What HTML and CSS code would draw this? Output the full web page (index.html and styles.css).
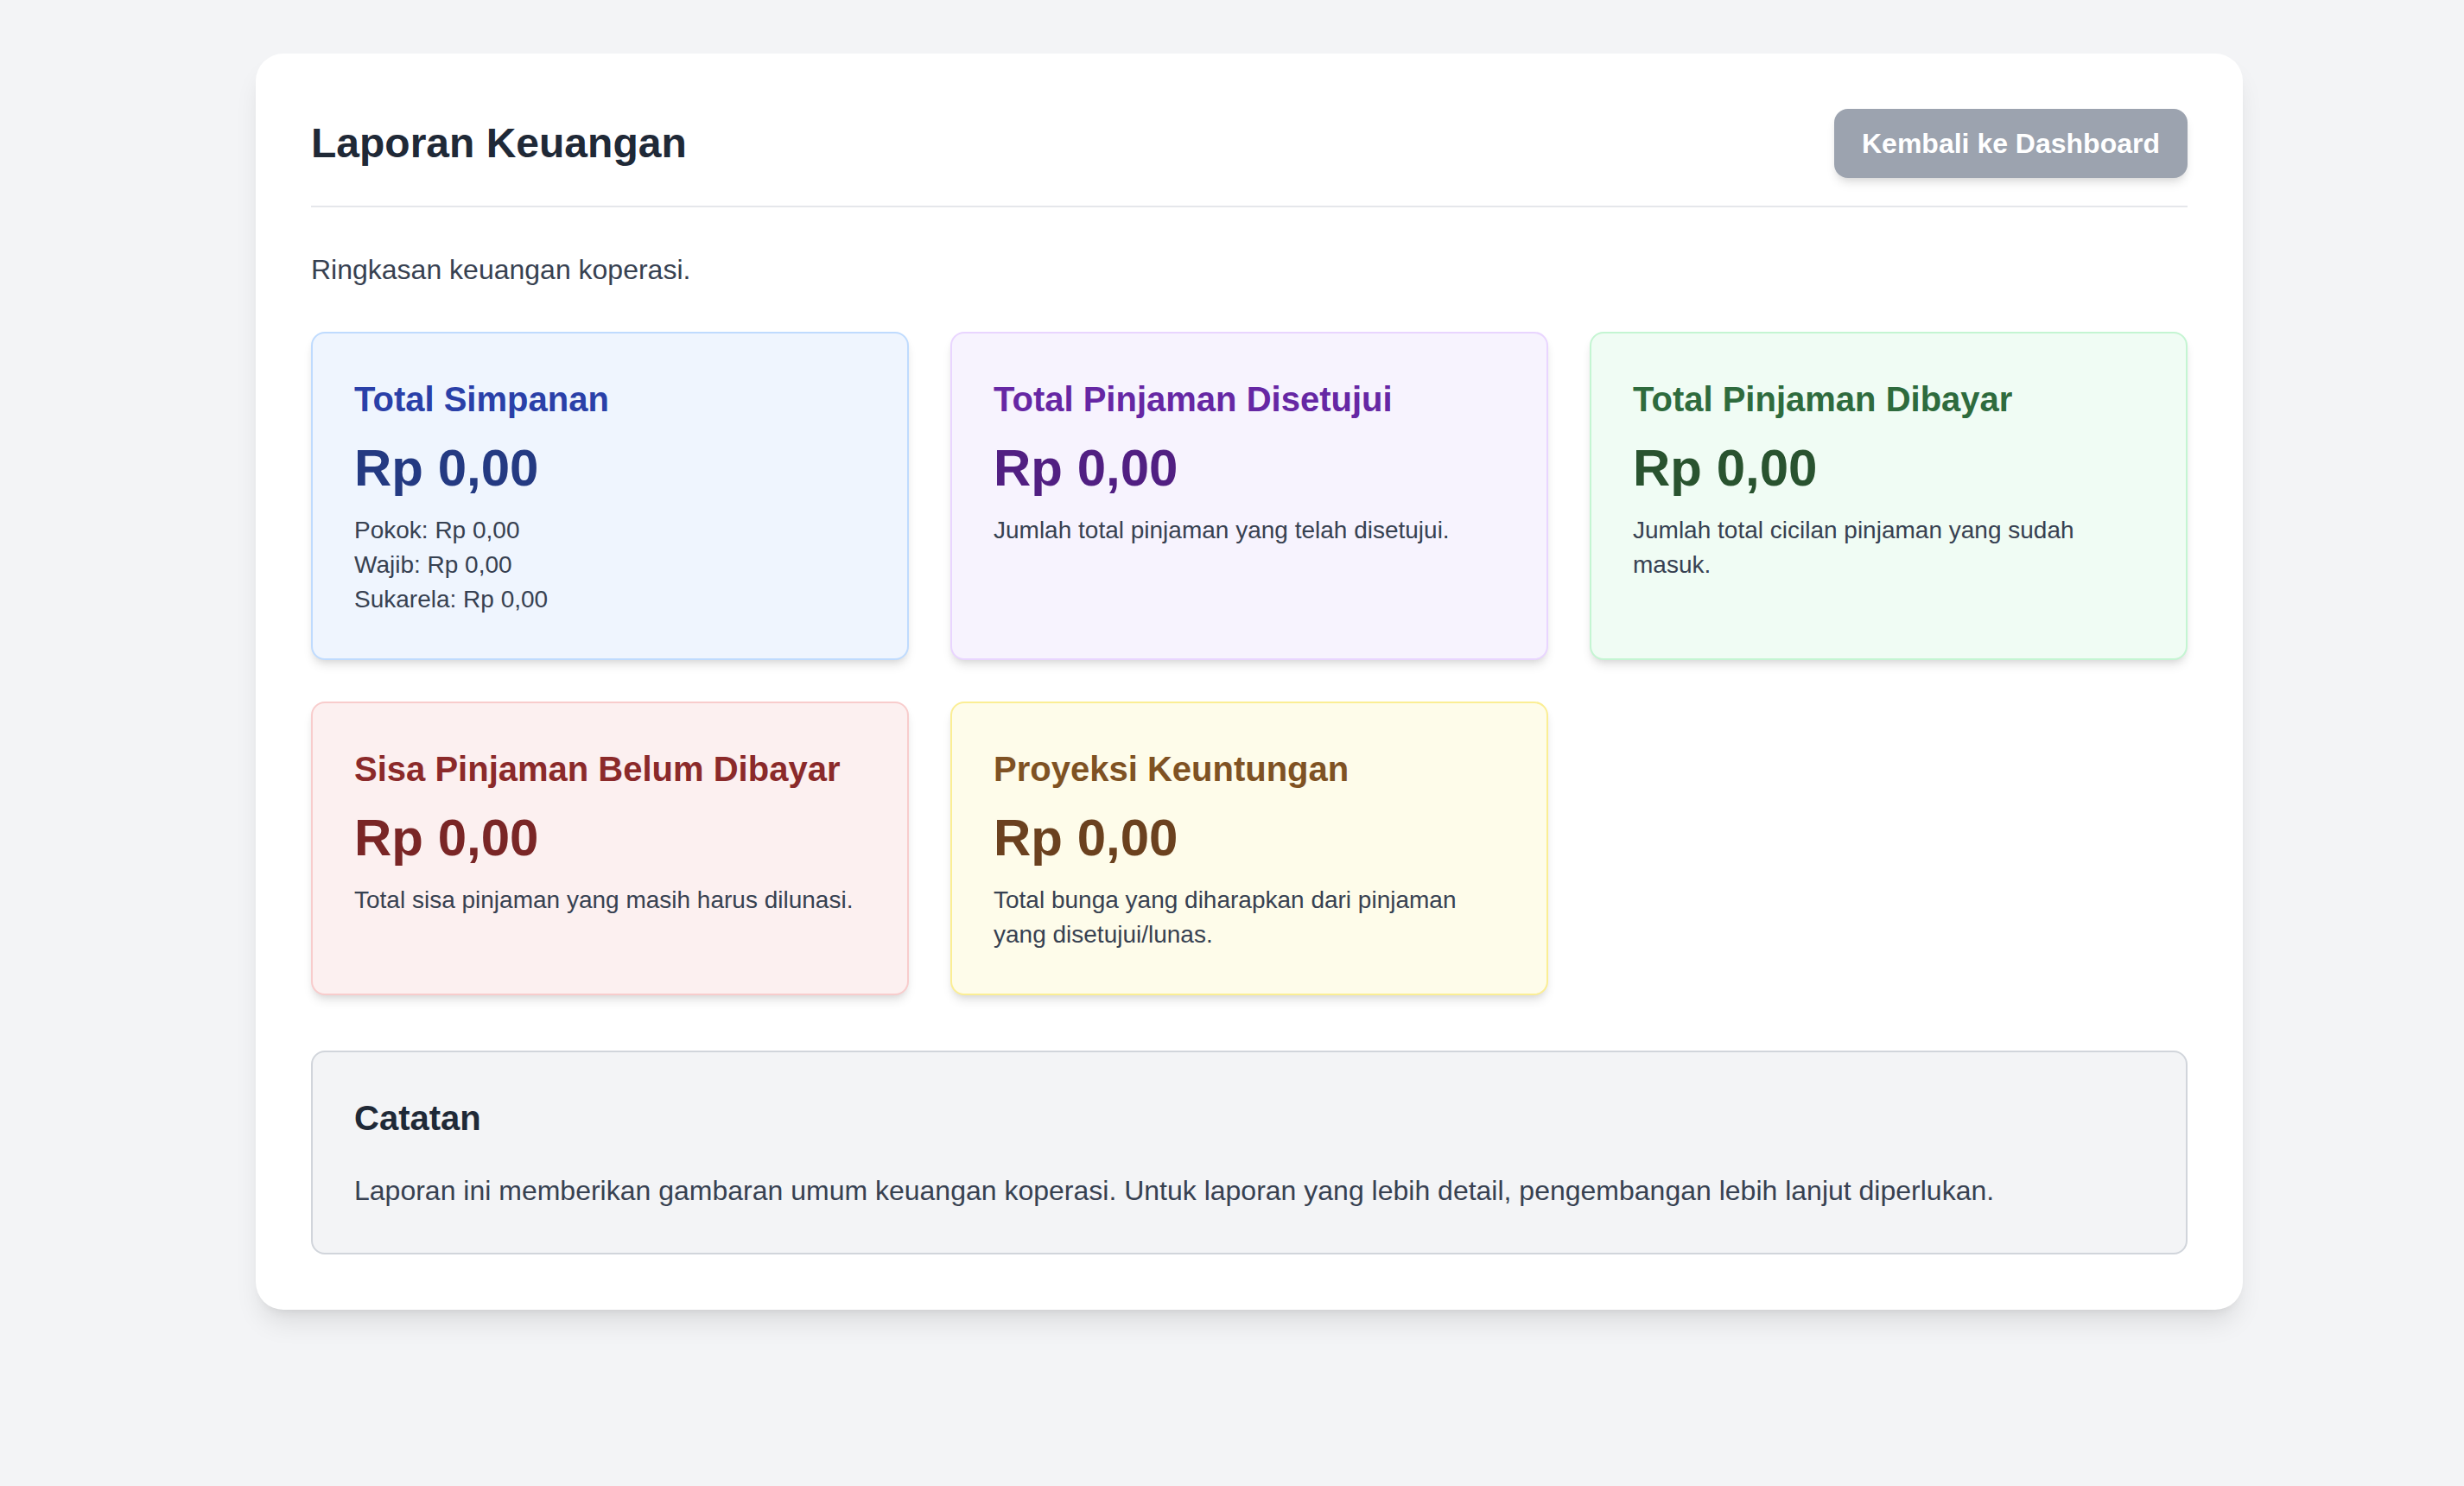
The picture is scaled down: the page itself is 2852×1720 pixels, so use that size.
FILE: index.html
```html
<!DOCTYPE html>
<html lang="id">
<head>
    <meta charset="UTF-8">
    <meta name="viewport" content="width=device-width, initial-scale=1.0">
    <title>Laporan Keuangan</title>
    <link rel="stylesheet" href="styles.css">
</head>
<body>
    <div class="wrapper">
        <div class="report">
            <div class="report-header">
                <h1>Laporan Keuangan</h1>
                <a href="#" class="button">Kembali ke Dashboard</a>
            </div>

            <p class="intro">Ringkasan keuangan koperasi.</p>

            <div class="card-grid">
                <div class="card card-blue">
                    <h2 class="card-title">Total Simpanan</h2>
                    <p class="card-amount">Rp 0,00</p>
                    <div class="card-text">
                        <p>Pokok: Rp 0,00</p>
                        <p>Wajib: Rp 0,00</p>
                        <p>Sukarela: Rp 0,00</p>
                    </div>
                </div>

                <div class="card card-purple">
                    <h2 class="card-title">Total Pinjaman Disetujui</h2>
                    <p class="card-amount">Rp 0,00</p>
                    <p class="card-text">Jumlah total pinjaman yang telah disetujui.</p>
                </div>

                <div class="card card-green">
                    <h2 class="card-title">Total Pinjaman Dibayar</h2>
                    <p class="card-amount">Rp 0,00</p>
                    <p class="card-text">Jumlah total cicilan pinjaman yang sudah masuk.</p>
                </div>

                <div class="card card-red">
                    <h2 class="card-title">Sisa Pinjaman Belum Dibayar</h2>
                    <p class="card-amount">Rp 0,00</p>
                    <p class="card-text">Total sisa pinjaman yang masih harus dilunasi.</p>
                </div>

                <div class="card card-yellow">
                    <h2 class="card-title">Proyeksi Keuntungan</h2>
                    <p class="card-amount">Rp 0,00</p>
                    <p class="card-text">Total bunga yang diharapkan dari pinjaman yang disetujui/lunas.</p>
                </div>
            </div>

            <div class="note">
                <h3>Catatan</h3>
                <p>Laporan ini memberikan gambaran umum keuangan koperasi. Untuk laporan yang lebih detail, pengembangan lebih lanjut diperlukan.</p>
            </div>
        </div>
    </div>
</body>
</html>
```

FILE: styles.css
```css
* {
    box-sizing: border-box;
}

body {
    margin: 0;
    font-family: "Liberation Sans", Arial, sans-serif;
    background-color: #f3f4f6;
    color: #1f2937;
}

h1, h2, h3, p {
    margin: 0;
}

.wrapper {
    padding: 62px 0 80px 40px;
}

.report {
    width: 2300px;
    margin: 0 auto;
    background: #ffffff;
    border-radius: 32px;
    padding: 64px;
    box-shadow: 0 20px 30px -6px rgba(0, 0, 0, 0.1), 0 8px 12px -8px rgba(0, 0, 0, 0.1);
}

.report-header {
    display: flex;
    justify-content: space-between;
    align-items: center;
    padding-bottom: 32px;
    border-bottom: 2px solid #e5e7eb;
    margin-bottom: 48px;
}

.report-header h1 {
    font-size: 48px;
    line-height: 64px;
    font-weight: bold;
    color: #1f2937;
}

.button {
    background-color: #9ca3af;
    color: white;
    font-weight: bold;
    font-size: 32px;
    line-height: 48px;
    padding: 16px 32px;
    border-radius: 16px;
    text-decoration: none;
    box-shadow: 0 8px 12px -2px rgba(0, 0, 0, 0.1), 0 4px 8px -4px rgba(0, 0, 0, 0.1);
}

.intro {
    font-size: 32px;
    line-height: 48px;
    color: #374151;
    margin-bottom: 48px;
}

.card-grid {
    display: grid;
    grid-template-columns: repeat(3, 1fr);
    gap: 48px;
}

.card {
    border: 2px solid;
    border-radius: 16px;
    padding: 48px;
    box-shadow: 0 8px 12px -2px rgba(0, 0, 0, 0.1), 0 4px 8px -4px rgba(0, 0, 0, 0.1);
}

.card-title {
    font-size: 40px;
    line-height: 56px;
    font-weight: bold;
    margin-bottom: 16px;
}

.card-amount {
    font-size: 60px;
    line-height: 72px;
    font-weight: bold;
    margin-bottom: 16px;
}

.card-text,
.card-text p {
    font-size: 28px;
    line-height: 40px;
    color: #374151;
}

/* card colours */
.card-blue { background: #eff5fe; border-color: #bfdbfe; }
.card-blue .card-title { color: #2a40a8; }
.card-blue .card-amount { color: #243a82; }

.card-purple { background: #f7f3fe; border-color: #e9d5ff; }
.card-purple .card-title { color: #6627a4; }
.card-purple .card-amount { color: #511f82; }

.card-green { background: #f0fcf4; border-color: #c4f5d2; }
.card-green .card-title { color: #2e6b3d; }
.card-green .card-amount { color: #29532f; }

.card-red { background: #fcf0f0; border-color: #f8cccc; }
.card-red .card-title { color: #8b2a2a; }
.card-red .card-amount { color: #7a2626; }

.card-yellow { background: #fefcea; border-color: #fbee94; }
.card-yellow .card-title { color: #7f5223; }
.card-yellow .card-amount { color: #6b411f; }

.note {
    margin-top: 64px;
    background: #f3f4f6;
    border: 2px solid #d1d5db;
    border-radius: 16px;
    padding: 48px;
}

.note h3 {
    font-size: 40px;
    line-height: 56px;
    font-weight: bold;
    color: #1f2937;
    margin-bottom: 32px;
}

.note p {
    font-size: 32px;
    line-height: 48px;
    color: #374151;
}
```
